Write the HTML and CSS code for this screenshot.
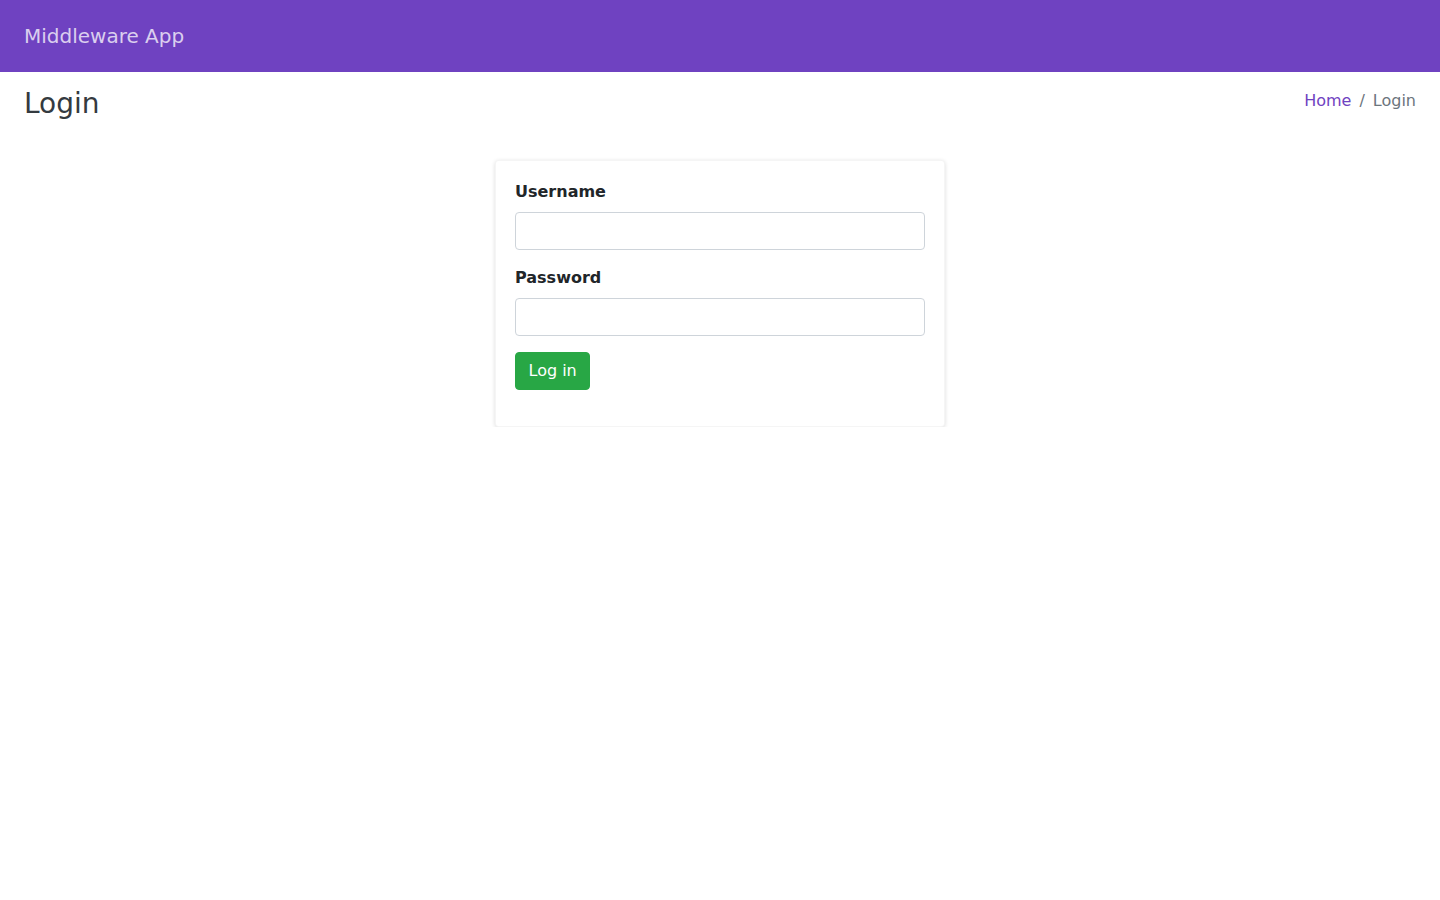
FILE: index.html
```html
<!DOCTYPE html>
<html lang="en">
<head>
<meta charset="utf-8">
<title>Login - Middleware App</title>
<link rel="stylesheet" href="styles.css">
</head>
<body>
<nav class="navbar">
  <a class="brand" href="#">Middleware App</a>
</nav>
<main class="content">
  <div class="page-head">
    <h1 class="page-title">Login</h1>
    <ol class="breadcrumb">
      <li class="crumb"><a href="#" class="crumb-link">Home</a></li>
      <li class="crumb-sep">/</li>
      <li class="crumb active">Login</li>
    </ol>
  </div>
  <div class="card-wrap">
    <form class="card">
      <div class="form-group">
        <label class="label" for="username">Username</label>
        <input class="input" id="username" type="text">
      </div>
      <div class="form-group">
        <label class="label" for="password">Password</label>
        <input class="input" id="password" type="password">
      </div>
      <div class="form-group">
        <button class="btn" type="submit">Log in</button>
      </div>
    </form>
  </div>
</main>
</body>
</html>
```

FILE: styles.css
```css
* { box-sizing: border-box; }
html, body { margin: 0; padding: 0; }
body {
  font-family: "DejaVu Sans", "Liberation Sans", sans-serif;
  font-size: 16px;
  line-height: 1.5;
  color: #212529;
  background: #fff;
}
.navbar {
  height: 72px;
  background: #6f42c1;
  display: flex;
  align-items: center;
  padding: 0 24px;
}
.brand {
  font-size: 20px;
  color: rgba(255, 255, 255, 0.75);
  text-decoration: none;
  line-height: 1.5;
}
.content { padding: 15px 24px 0; }
.page-head {
  display: flex;
  justify-content: space-between;
  align-items: center;
}
.page-title {
  margin: 0;
  font-size: 28px;
  font-weight: 400;
  line-height: 1.2;
  color: #343a40;
}
.breadcrumb {
  list-style: none;
  margin: 0;
  padding: 0;
  display: flex;
  gap: 8px;
  color: #6c757d;
  margin-top: -5px;
}
.crumb-link { color: #6f42c1; text-decoration: none; }
.crumb-sep { color: #6c757d; }
.card-wrap {
  display: flex;
  justify-content: center;
  margin-top: 39px;
}
.card {
  width: 450px;
  padding: 19px 19px 4px;
  background: #fff;
  border: 1px solid rgba(0, 0, 0, 0.04);
  border-radius: 4px;
  box-shadow: 0 1px 4px rgba(0, 0, 0, 0.14);
}
.form-group {
  margin-bottom: 16px;
  display: flex;
  flex-direction: column;
  align-items: flex-start;
}
.card .form-group:last-child { margin-bottom: 16px; padding-bottom: 16px; }
.label {
  font-weight: 700;
  margin-bottom: 8px;
}
.input {
  width: 100%;
  height: 38px;
  padding: 6px 12px;
  font: inherit;
  border: 1px solid #ced4da;
  border-radius: 4px;
  background: #fff;
}
.btn {
  font: inherit;
  color: #fff;
  background: #28a745;
  border: 1px solid #28a745;
  border-radius: 4px;
  padding: 6px 12.5px;
  height: 38px;
  line-height: 24px;
  cursor: pointer;
}
```
